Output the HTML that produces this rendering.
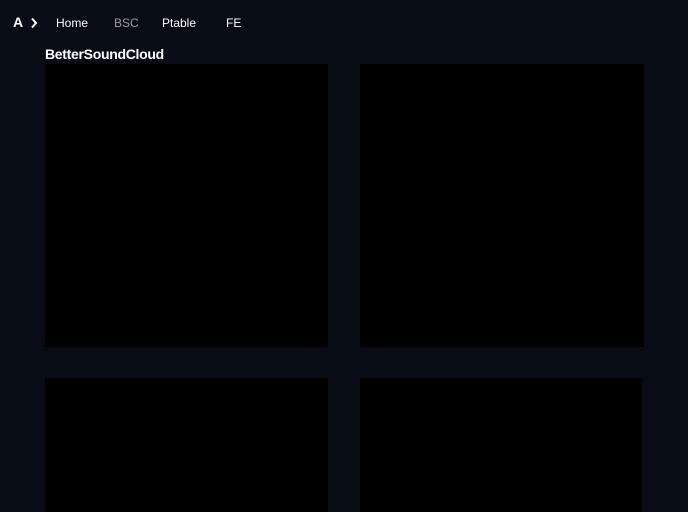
<!DOCTYPE html>
<html><head><meta charset="utf-8"><style>
html,body{margin:0;padding:0;width:688px;height:512px;overflow:hidden;background:#080c14;font-family:"Liberation Sans",sans-serif;color:#fff;position:relative}
.nav{position:absolute;top:15px;font-size:12px;line-height:16px}
.b{position:absolute;background:#000;width:283px;height:283px}
h1{position:absolute;left:45px;top:46px;margin:0;font-size:14px;font-weight:bold;letter-spacing:-0.3px}
</style></head><body>
<div class="nav" style="left:13px;font-weight:bold;font-size:14px;top:14px">A</div>
<svg style="position:absolute;left:30px;top:17px" width="8" height="12" viewBox="0 0 8 12"><path d="M2 1.5 L6 6 L2 10.5" stroke="#fff" stroke-width="2" fill="none"/></svg>
<div class="nav" style="left:56px">Home</div>
<div class="nav" style="left:114px;color:#9a9da3">BSC</div>
<div class="nav" style="left:162px">Ptable</div>
<div class="nav" style="left:226px">FE</div>
<h1>BetterSoundCloud</h1>
<div class="b" style="left:45px;top:64px"></div>
<div class="b" style="left:360px;top:64px;width:284px"></div>
<div class="b" style="left:45px;top:378px;height:134px"></div>
<div class="b" style="left:360px;top:378px;width:282px;height:134px"></div>
</body></html>
